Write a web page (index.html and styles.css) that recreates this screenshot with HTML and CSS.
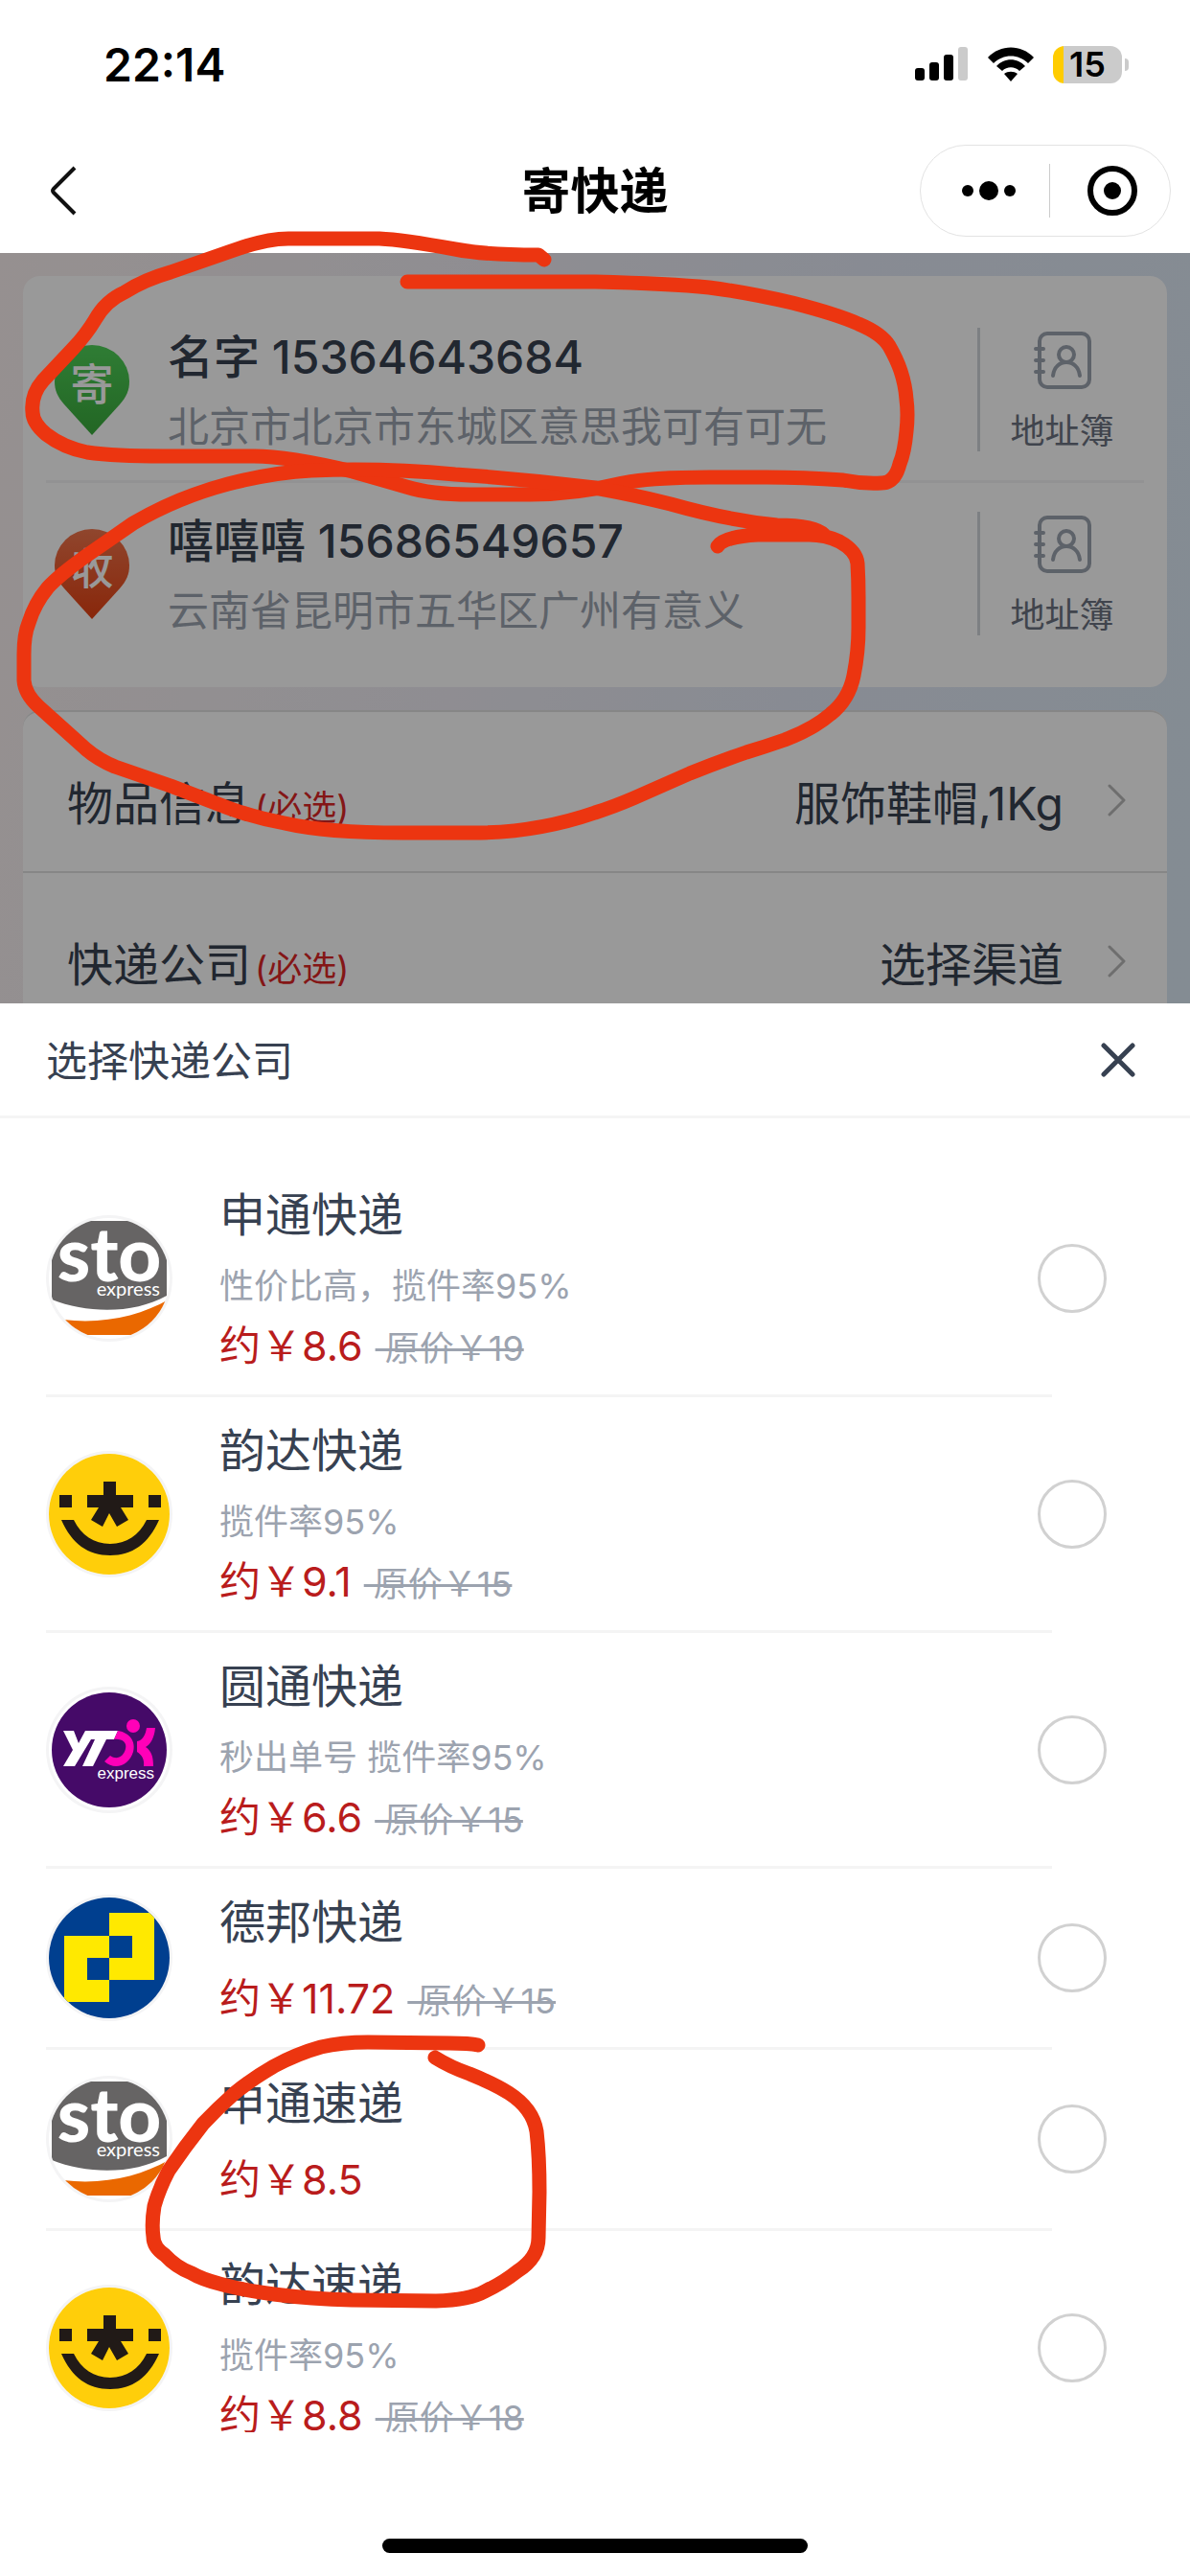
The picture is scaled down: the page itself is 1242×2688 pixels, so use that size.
FILE: index.html
```html
<!DOCTYPE html>
<html lang="zh-CN">
<head>
<meta charset="utf-8">
<meta name="viewport" content="width=device-width, initial-scale=1">
<title>寄快递</title>
<link rel="stylesheet" href="styles.css">
</head>
<body>
<svg class="defs" width="0" height="0" aria-hidden="true">
  <defs>
    <linearGradient id="pin-green" x1="0" y1="0" x2="0" y2="1"><stop offset="0" stop-color="#4fd058"/><stop offset="1" stop-color="#3aaa3c"/></linearGradient>
    <linearGradient id="pin-red" x1="0" y1="0" x2="0" y2="1"><stop offset="0" stop-color="#f0754c"/><stop offset="1" stop-color="#e44112"/></linearGradient>
    <clipPath id="disc"><circle cx="66" cy="66" r="63"/></clipPath>
  </defs>
  <symbol id="book" viewBox="0 2 60 72">
    <g fill="none" stroke="currentColor" stroke-width="4" stroke-linecap="round">
      <rect x="6" y="8" width="52" height="56" rx="8"/>
      <path d="M2 24H10M2 36H10M2 48H10"/>
      <circle cx="34" cy="30" r="8"/>
      <path d="M20 52C21 43 27 38 34 38S47 43 48 52"/>
    </g>
  </symbol>
  <symbol id="chevron" viewBox="0 0 20 34">
    <path d="M2 2L17 17L2 32" fill="none" stroke="currentColor" stroke-width="3" stroke-linecap="round" stroke-linejoin="round"/>
  </symbol>
  <symbol id="logo-sto" viewBox="0 0 132 132">
    <g clip-path="url(#disc)">
      <path fill="#666464" d="M6 6H126V84C92 103 44 103 6 88Z"/>
      <path fill="#ea6800" d="M18 109C60 114 98 105 128 88V125H18Z"/>
    </g>
  </symbol>
  <symbol id="logo-yunda" viewBox="0 0 132 132">
    <circle cx="66" cy="66" r="63" fill="#ffce0a"/>
    <path fill="#211a17" d="M14 46H27V59H14ZM107 46H120V59H107ZM60 32H73V46H91V59H78L86 72L74 79L66 65L59 79L47 72L55 59H43V46H60ZM16 72H29C37 88 50 97 67 97S97 88 105 72H118C107 97 90 109 67 109S27 97 16 72Z"/>
  </symbol>
  <symbol id="logo-yto" viewBox="0 0 132 132">
    <circle cx="66" cy="66" r="60" fill="#450a68"/>
    <path fill="#fff" d="M18 46H29L34 59L41 46H75L71 55H63L49 83H38L51 55H47L30 83H18L28 66Z"/>
    <circle cx="91" cy="41" r="7" fill="#ff00b8"/>
    <path fill="#ff00b8" d="M75 46C88 48 94 58 91 68C87 82 72 88 61 78L67 72C74 77 81 73 83 65C85 58 79 54 71 55Z"/>
    <path fill="#ff00b8" d="M105 43H114C113 54 109 60 104 63C110 67 112 73 112 83H102C103 76 100 71 95 68V57C101 56 104 50 105 43Z"/>
  </symbol>
  <symbol id="logo-deppon" viewBox="0 0 132 132">
    <g clip-path="url(#disc)">
      <rect width="132" height="132" fill="#003f8f"/>
      <path fill="#ffe900" d="M66 19H113V89H66V66H90V43H66ZM19 43H66V66H43V89H66V112H19Z"/>
    </g>
  </symbol>
</svg>

<div class="status">
  <time>22:14</time>
  <div class="status-icons">
    <svg width="56" height="36" viewBox="0 0 56 36" aria-label="信号"><rect y="22" width="10" height="13" rx="3"/><rect x="15" y="16" width="10" height="19" rx="3"/><rect x="30" y="8" width="10" height="27" rx="3"/><rect x="45" width="10" height="35" rx="3" fill="#cbcbcb"/></svg>
    <svg width="48" height="36" viewBox="0 0 48 36" aria-label="无线网络"><path d="M0 11C13-3 35-3 48 11L42 17C32 7 16 7 6 17ZM9 20C17 11 31 11 39 20L33 25C28 20 20 20 15 25ZM17 28C21 25 27 25 31 28L24 36Z"/></svg>
    <div class="battery"><span>15</span></div>
  </div>
</div>

<header class="nav">
  <button class="back" aria-label="返回"><svg width="28" height="52" viewBox="0 0 28 52"><path d="M26 2L4 24Q2 26 4 28L26 50" fill="none" stroke="#111" stroke-width="4"/></svg></button>
  <h1>寄快递</h1>
  <div class="capsule">
    <button aria-label="更多"><svg width="58" height="20" viewBox="0 0 58 20"><circle cx="7" cy="10" r="6"/><circle cx="29" cy="10" r="10"/><circle cx="51" cy="10" r="6"/></svg></button>
    <button aria-label="关闭小程序"><svg width="52" height="52" viewBox="0 0 52 52"><circle cx="26" cy="26" r="23" fill="none" stroke="#000" stroke-width="6"/><circle cx="26" cy="26" r="9"/></svg></button>
  </div>
</header>

<main class="order">
  <section class="card contacts">
    <div class="contact">
      <svg class="pin" viewBox="0 0 78 94"><path fill="url(#pin-green)" d="M39 94L10 62C3 54 0 47 0 38A39 38 0 0 1 78 38C78 47 75 54 68 62Z"/><text x="39" y="58" text-anchor="middle">寄</text></svg>
      <div class="who"><p class="name">名字 15364643684</p><p class="address">北京市北京市东城区意思我可有可无</p></div>
      <button class="book"><svg width="60" height="72"><use href="#book"/></svg>地址簿</button>
    </div>
    <div class="contact">
      <svg class="pin" viewBox="0 0 78 94"><path fill="url(#pin-red)" d="M39 94L10 62C3 54 0 47 0 38A39 38 0 0 1 78 38C78 47 75 54 68 62Z"/><text x="39" y="58" text-anchor="middle">收</text></svg>
      <div class="who"><p class="name">嘻嘻嘻 15686549657</p><p class="address">云南省昆明市五华区广州有意义</p></div>
      <button class="book"><svg width="60" height="72"><use href="#book"/></svg>地址簿</button>
    </div>
  </section>
  <section class="card fields">
    <button class="field"><span>物品信息<small>(必选)</small></span><span class="value">服饰鞋帽,1Kg</span><svg width="20" height="34"><use href="#chevron"/></svg></button>
    <button class="field"><span>快递公司<small>(必选)</small></span><span class="value">选择渠道</span><svg width="20" height="34"><use href="#chevron"/></svg></button>
  </section>
</main>

<section class="sheet">
  <div class="sheet-head">
    <h2>选择快递公司</h2>
    <button aria-label="关闭"><svg width="36" height="36" viewBox="0 0 36 36"><path d="M3 3L33 33M33 3L3 33" stroke="#374151" stroke-width="5" stroke-linecap="round"/></svg></button>
  </div>
  <div class="options">
    <label class="option"><svg class="logo" viewBox="0 0 132 132"><use href="#logo-sto"/><text x="66" y="69" text-anchor="middle" class="sto-word">sto</text><text x="119" y="84" text-anchor="end" class="sto-sub">express</text></svg><span class="info"><b>申通快递</b><span class="note">性价比高，揽件率95%</span><span class="price">约￥8.6<s> 原价￥19</s></span></span><input type="radio" name="courier"></label>
    <label class="option"><svg class="logo" viewBox="0 0 132 132"><use href="#logo-yunda"/></svg><span class="info"><b>韵达快递</b><span class="note">揽件率95%</span><span class="price">约￥9.1<s> 原价￥15</s></span></span><input type="radio" name="courier"></label>
    <label class="option"><svg class="logo" viewBox="0 0 132 132"><use href="#logo-yto"/><text x="113" y="96" text-anchor="end" class="yto-sub">express</text></svg><span class="info"><b>圆通快递</b><span class="note">秒出单号 揽件率95%</span><span class="price">约￥6.6<s> 原价￥15</s></span></span><input type="radio" name="courier"></label>
    <label class="option"><svg class="logo" viewBox="0 0 132 132"><use href="#logo-deppon"/></svg><span class="info"><b>德邦快递</b><span class="price">约￥11.72<s> 原价￥15</s></span></span><input type="radio" name="courier"></label>
    <label class="option"><svg class="logo" viewBox="0 0 132 132"><use href="#logo-sto"/><text x="66" y="69" text-anchor="middle" class="sto-word">sto</text><text x="119" y="84" text-anchor="end" class="sto-sub">express</text></svg><span class="info"><b>申通速递</b><span class="price">约￥8.5</span></span><input type="radio" name="courier"></label>
    <label class="option"><svg class="logo" viewBox="0 0 132 132"><use href="#logo-yunda"/></svg><span class="info"><b>韵达速递</b><span class="note">揽件率95%</span><span class="price">约￥8.8<s> 原价￥18</s></span></span><input type="radio" name="courier"></label>
  </div>
  <div class="home"><i></i></div>
</section>

<svg class="marks" viewBox="0 0 1242 2688" aria-hidden="true">
  <path d="M425 294H621Q700 296 740 300Q779 305 827 316Q874 328 896 338Q920 348 928 361Q936 375 940 387Q945 402 946 417Q948 432 946 450Q944 472 939 484Q934 504 920 504Q900 505 880 501Q839 498 800 498H740Q680 498 650 504Q600 516 554 516H490Q450 516 424 508L368 492Q301 476 265 476H170Q120 476 91 472Q66 467 48 453Q34 441 34 430Q32 412 45 397L76 364Q90 349 99 334Q110 314 130 305Q150 292 178 284L250 259Q280 249 301 249H396Q420 250 475 260Q505 266 562 266L568 271"/>
  <path d="M749 570Q755 560 791 558H840Q860 557 876 565Q894 575 895 588Q896 605 896 623V655Q896 680 891 705Q886 730 867 745Q850 760 819 772Q799 779 779 785Q750 795 720 807L661 833Q640 842 621 848Q560 869 495 869H420Q340 869 297 859Q265 853 238 843L178 820L120 800Q103 793 90 782L40 737Q26 724 25 710V683Q25 662 30 650Q36 630 50 613Q62 600 90 580L139 546Q185 519 238 505Q285 493 325 491Q400 488 475 495Q550 500 621 509Q665 517 700 526Q760 543 811 548Q850 548 860 558"/>
  <path d="M499 2134Q490 2132 469 2132L384 2131Q356 2131 335 2136Q310 2143 286 2156Q262 2170 245 2184Q227 2200 212 2216Q193 2240 176 2265Q166 2284 161 2302Q158 2320 160 2334Q160 2345 172 2353Q184 2366 200 2372Q210 2378 229 2383Q250 2389 286 2394Q325 2399 367 2400L455 2401Q490 2400 506 2391Q525 2382 540 2370Q562 2356 562 2335L563 2287Q563 2250 560 2224Q556 2200 531 2184Q515 2174 490 2164Q470 2157 454 2147"/>
</svg>
</body>
</html>
```
FILE: styles.css
```css
* { box-sizing: border-box; margin: 0; padding: 0; }

body {
  position: relative;
  display: flex;
  flex-direction: column;
  height: 100vh;
  overflow: hidden;
  background: #fff;
  color: #374151;
  font-family: Inter, "Noto Sans CJK SC", sans-serif;
  font-size: 43px;
}

button {
  border: 0;
  background: none;
  color: inherit;
  font: inherit;
  cursor: pointer;
}

svg { display: block; flex: none; }
.defs { position: absolute; }

/* Status bar */
.status {
  display: flex;
  align-items: center;
  justify-content: space-between;
  flex: none;
  height: 134px;
  padding: 0 71px 0 108px;
  color: #000;
}
.status time { font-size: 48px; font-weight: 600; }
.status-icons { display: flex; align-items: center; gap: 20px; }
.battery {
  position: relative;
  width: 72px;
  height: 39px;
  border-radius: 12px;
  background: linear-gradient(90deg, #ffcc00 11px, #cbcbcb 11px);
  font-size: 36px;
  font-weight: 600;
  line-height: 39px;
  text-align: center;
}
.battery::after {
  content: "";
  position: absolute;
  left: 75px;
  top: 13px;
  width: 4px;
  height: 13px;
  border-radius: 0 4px 4px 0;
  background: #cbcbcb;
}

/* Title bar */
.nav {
  display: grid;
  grid-template-columns: 1fr auto 1fr;
  align-items: center;
  flex: none;
  height: 130px;
  padding: 0 20px;
  color: #000;
}
.nav h1 { padding-bottom: 6px; font-size: 51px; font-weight: 700; }
.back { justify-self: start; padding: 20px 32px; }
.capsule {
  display: flex;
  justify-self: end;
  width: 262px;
  height: 96px;
  border: 1px solid #e3e3e3;
  border-radius: 48px;
}
.capsule button {
  display: flex;
  align-items: center;
  justify-content: center;
  flex: 1 1 0;
  padding-left: 8px;
}
.capsule button + button {
  justify-content: flex-start;
  padding-left: 0;
}
.capsule button + button::before {
  content: "";
  width: 1px;
  height: 56px;
  margin-right: 39px;
  background: #ccc;
}

/* Order form behind the sheet */
.order {
  position: relative;
  display: flex;
  flex-direction: column;
  flex: none;
  gap: 24px;
  padding: 24px 24px 0;
  background: linear-gradient(100deg, #faf1f1 0%, #eeecf3 40%, #e3e8f5 65%, #dce9f6 100%);
}
.order::after {
  content: "";
  position: absolute;
  inset: 0;
  background: rgba(0, 0, 0, .4);
}
.card { border-radius: 18px; background: #fff; }
.contacts { padding: 24px 24px 21px; }
.contact {
  display: flex;
  align-items: center;
  height: 192px;
  border-bottom: 3px solid #f3f4f6;
}
.contact:last-child { border-color: transparent; }
.pin { width: 78px; height: 94px; margin: 0 40px 0 9px; }
.pin text { fill: #fff; font-size: 45px; font-weight: 500; }
.who { flex: 1; padding-top: 4px; line-height: 72px; white-space: nowrap; }
.name { font-size: 48px; font-weight: 500; }
.address { color: #9ca3af; }
.book {
  display: flex;
  flex-direction: column;
  align-items: center;
  justify-content: space-between;
  width: 174px;
  height: 129px;
  border-left: 3px solid #d1d5db;
  color: #6b7280;
  font-size: 36px;
  line-height: 42px;
}
.book svg { color: #9ca3af; }

.fields { border-radius: 18px 18px 0 0; }
.field {
  display: flex;
  align-items: center;
  width: 100%;
  height: 168px;
  padding: 18px 42px 0 46px;
  border-top: 2px solid #e0e0e0;
  font-size: 48px;
}
.field:first-child { border-radius: 18px 18px 0 0; }
.field small { margin-left: 4px; color: #dc2626; font-size: 36px; }
.value { margin-left: auto; margin-right: 46px; }
.field svg { color: #b8b8b8; }

/* Courier sheet */
.sheet {
  position: relative;
  z-index: 1;
  display: flex;
  flex-direction: column;
  flex: 1;
  min-height: 0;
  margin-top: -30px;
  background: #fff;
}
.sheet-head {
  display: flex;
  align-items: center;
  justify-content: space-between;
  flex: none;
  height: 120px;
  padding: 0 57px 0 48px;
  border-bottom: 3px solid #f5f5f5;
}
.sheet-head h2 { padding-bottom: 4px; font-size: 43px; font-weight: 400; }
.options {
  flex: 1;
  min-height: 0;
  padding: 45px 144px 0 48px;
  overflow: hidden auto;
  scrollbar-width: none;
}
.option {
  display: flex;
  align-items: center;
  margin-right: -57px;
  background: linear-gradient(#f4f4f4, #f4f4f4) 0 100% / calc(100% - 57px) 3px no-repeat;
  padding-bottom: 3px;
}
.option:last-child { background: none; }
.logo {
  width: 132px;
  height: 132px;
  border-radius: 50%;
  background: #fff;
  box-shadow: inset 0 0 0 3px #f4f4f5;
}
.info {
  display: flex;
  flex-direction: column;
  flex: 1;
  padding: 24px 0 18px 49px;
  white-space: nowrap;
}
.info b {
  margin-bottom: 15px;
  font-size: 48px;
  font-weight: 400;
  line-height: 63px;
}
.note { color: #9ca3af; font-size: 36px; line-height: 57px; }
.price { color: #b91c1c; line-height: 66px; }
.price s {
  margin-left: 13px;
  color: #9ca3af;
  font-size: 36px;
  line-height: 1;
  text-decoration-thickness: 3px;
  white-space: pre;
}
.option input {
  appearance: none;
  width: 72px;
  height: 72px;
  border: 3px solid #d1d1d1;
  border-radius: 50%;
}
.option input:checked { border: 20px solid #b91c1c; }

.home {
  display: flex;
  align-items: flex-end;
  justify-content: center;
  flex: none;
  height: 150px;
  padding-bottom: 24px;
}
.home i { width: 444px; height: 15px; border-radius: 8px; background: #000; }

/* Logo lettering */
.sto-word { fill: #fff; font-family: Lato, sans-serif; font-size: 78px; font-weight: 900; }
.sto-sub { fill: #fff; font-family: Lato, sans-serif; font-size: 20px; font-weight: 400; }
.yto-sub { fill: #fff; font-family: "Liberation Sans", sans-serif; font-size: 17px; }

/* Hand-drawn marker strokes over the page */
.marks {
  position: absolute;
  z-index: 2;
  inset: 0 0 auto;
  width: 100%;
  fill: none;
  stroke: #ec3510;
  stroke-width: 15;
  stroke-linecap: round;
  stroke-linejoin: round;
  pointer-events: none;
}
```
